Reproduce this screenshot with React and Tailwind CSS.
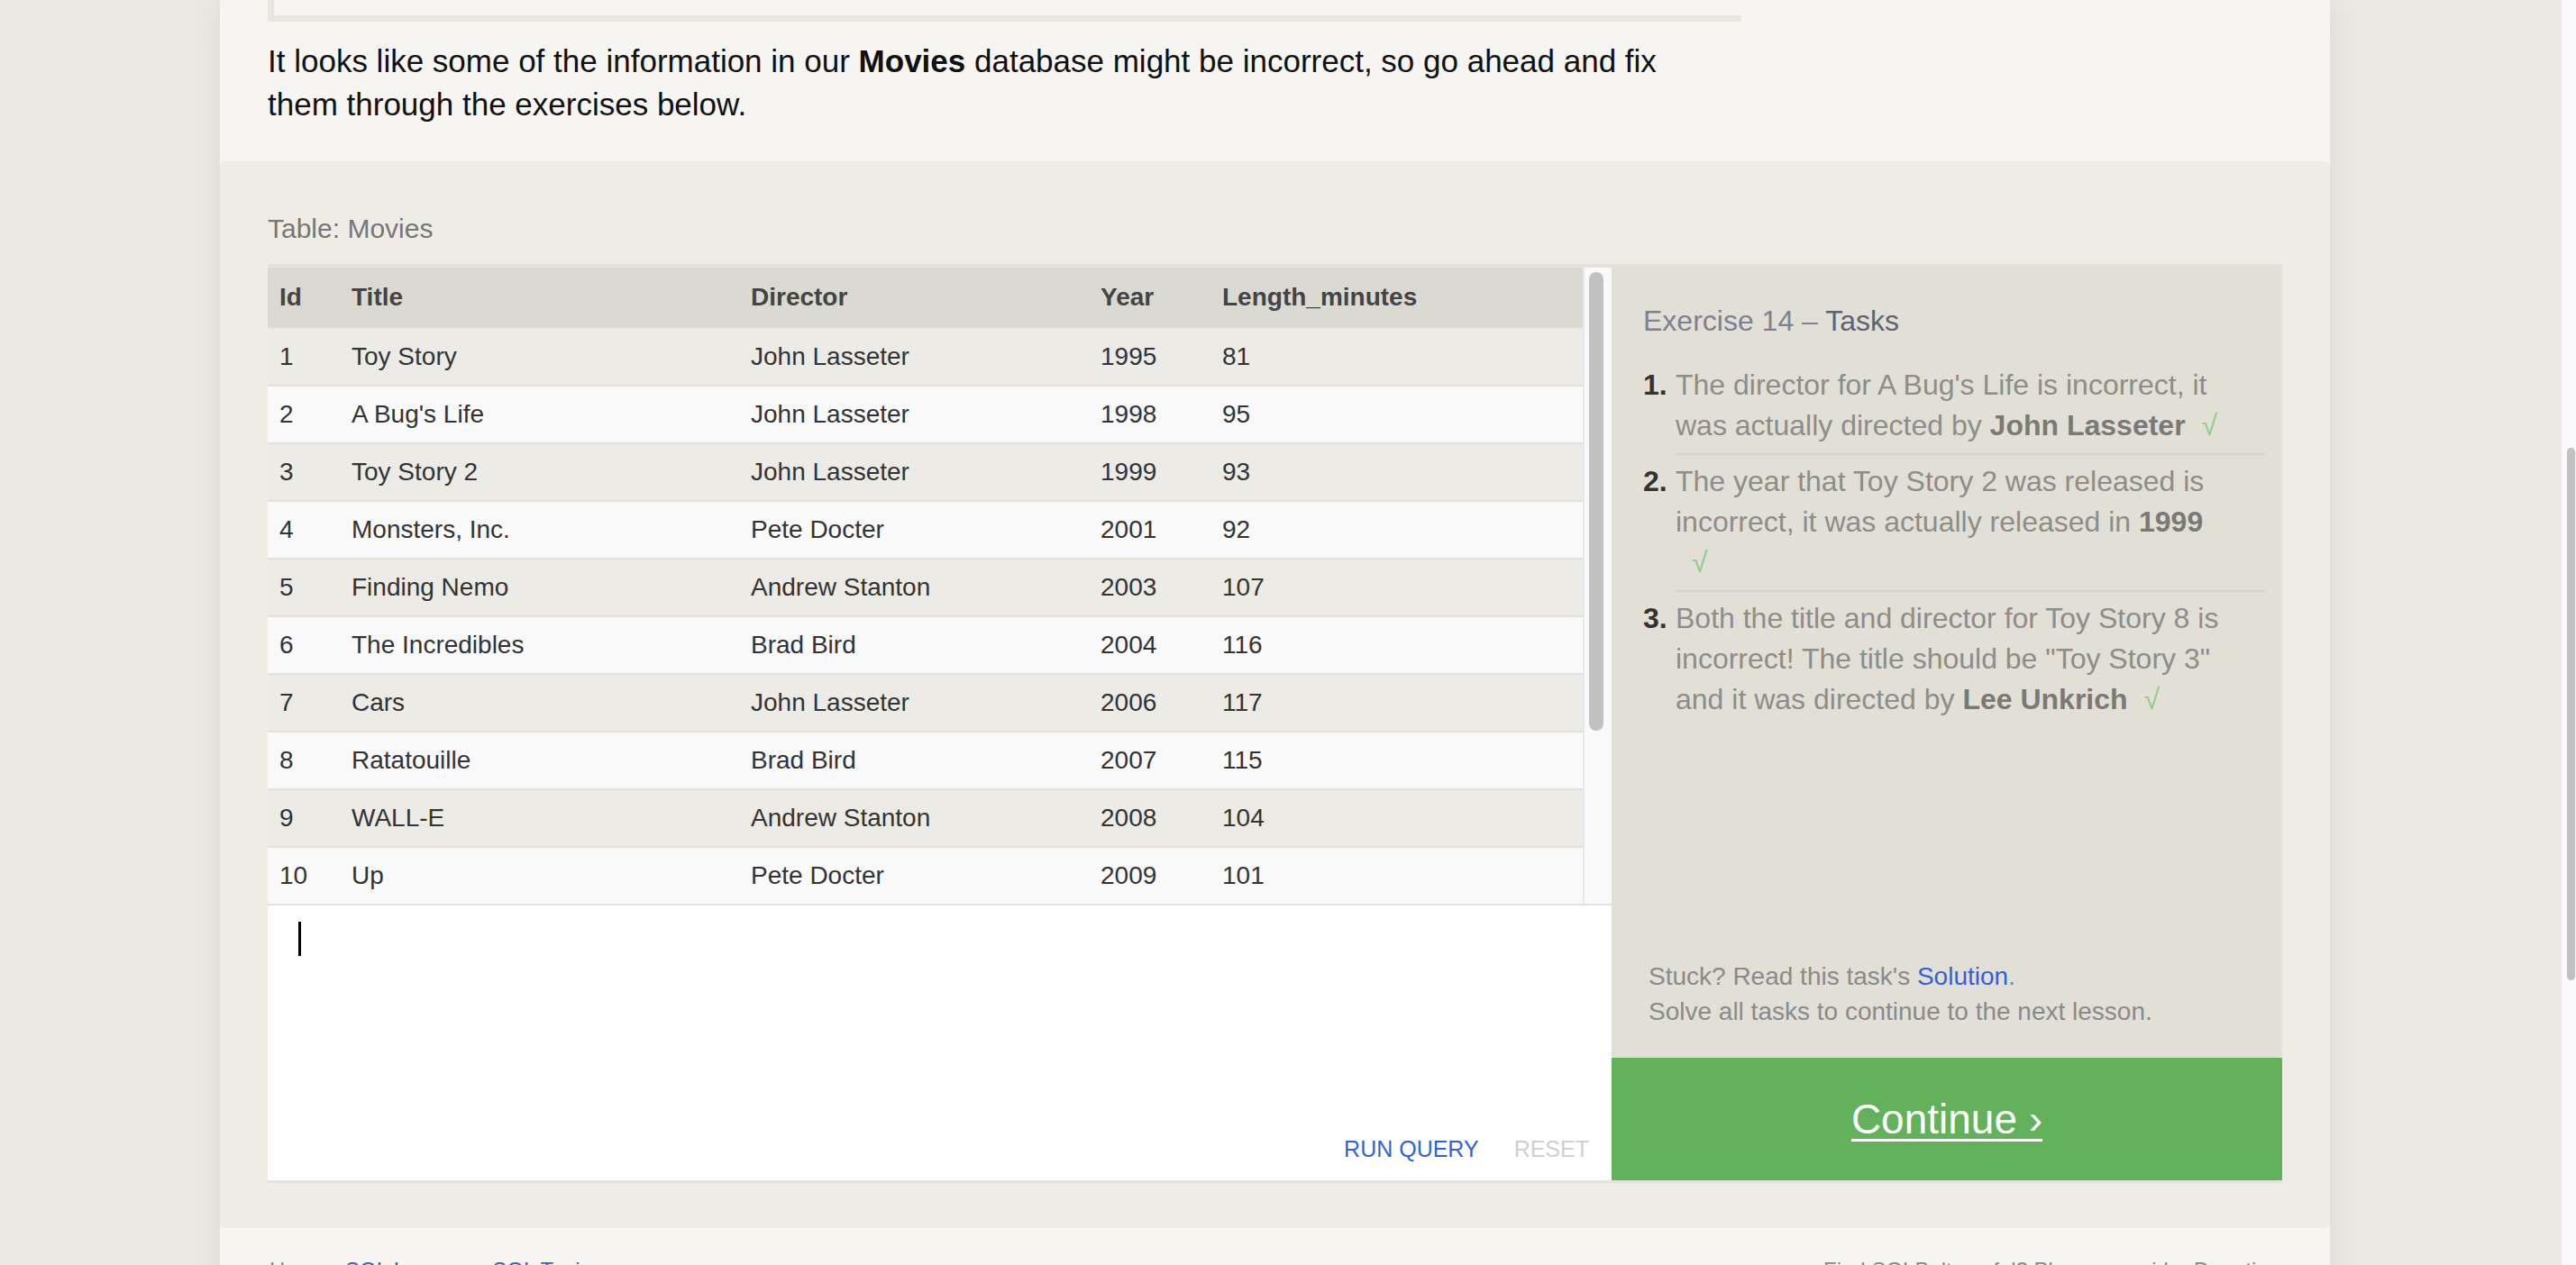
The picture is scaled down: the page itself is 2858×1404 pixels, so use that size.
const movies = [
  [1, 'Toy Story', 'John Lasseter', 1995, 81],
  [2, "A Bug's Life", 'John Lasseter', 1998, 95],
  [3, 'Toy Story 2', 'John Lasseter', 1999, 93],
  [4, 'Monsters, Inc.', 'Pete Docter', 2001, 92],
  [5, 'Finding Nemo', 'Andrew Stanton', 2003, 107],
  [6, 'The Incredibles', 'Brad Bird', 2004, 116],
  [7, 'Cars', 'John Lasseter', 2006, 117],
  [8, 'Ratatouille', 'Brad Bird', 2007, 115],
  [9, 'WALL-E', 'Andrew Stanton', 2008, 104],
  [10, 'Up', 'Pete Docter', 2009, 101],
]

const cols = 'grid grid-cols-[80px_443px_388px_135px_1fr] items-center'

function Check() {
  return <span className="ml-[18px] text-[#8fcd88]">√</span>
}

function MoviesTable() {
  return (
    <div className="flex">
      <div className="w-[1459px]">
        <div className={`${cols} h-[66px] bg-[#dbdad2] text-[28px] font-bold text-[#444]`}>
          {['Id', 'Title', 'Director', 'Year', 'Length_minutes'].map((h) => (
            <div key={h} className="pl-[13px]">{h}</div>
          ))}
        </div>
        {movies.map((row, i) => (
          <div
            key={row[0]}
            className={`${cols} h-[64px] border-t-2 border-[#e2e1db] text-[28px] text-[#333] ${
              i % 2 === 0 ? 'bg-[#ecebe5]' : 'bg-[#f9f9f9]'
            }`}
          >
            {row.map((cell, j) => (
              <div key={j} className="pl-[13px]">{cell}</div>
            ))}
          </div>
        ))}
      </div>
      {/* inner scrollbar */}
      <div className="w-[32px] border-l-2 border-[#e8e8e8] bg-[#f9f9f9] pt-[5px]">
        <div className="ml-[5px] h-[509px] w-[16px] rounded-full bg-[#c1c1c1]" />
      </div>
    </div>
  )
}

function Tasks() {
  return (
    <div className="flex w-[744px] flex-col bg-[#e2dfd7]">
      <div className="pl-[35px] pr-[18px] pt-[39px]">
        <h3 className="text-[32px] leading-[40px] text-[#7c8290]">
          Exercise 14 – <span className="text-[#5d6370]">Tasks</span>
        </h3>
        <ol className="mt-[29px] text-[32px] leading-[45px]">
          <li className="flex">
            <span className="w-[36px] font-bold text-[#333]">1.</span>
            <div className="flex-1 border-b-2 border-[#d7d4cb] pb-[8px] text-[#8e8d87]">
              The director for A Bug's Life is incorrect, it
              <br />
              was actually directed by <b className="text-[#7a7a75]">John Lasseter</b>
              <Check />
            </div>
          </li>
          <li className="flex pt-[7px]">
            <span className="w-[36px] font-bold text-[#333]">2.</span>
            <div className="flex-1 border-b-2 border-[#d7d4cb] pb-[8px] text-[#8e8d87]">
              The year that Toy Story 2 was released is
              <br />
              incorrect, it was actually released in <b className="text-[#7a7a75]">1999</b>
              <br />
              <Check />
            </div>
          </li>
          <li className="flex pt-[7px]">
            <span className="w-[36px] font-bold text-[#333]">3.</span>
            <div className="flex-1 text-[#8e8d87]">
              Both the title and director for Toy Story 8 is
              <br />
              incorrect! The title should be "Toy Story 3"
              <br />
              and it was directed by <b className="text-[#7a7a75]">Lee Unkrich</b>
              <Check />
            </div>
          </li>
        </ol>
      </div>
      <div className="flex-1" />
      <div className="mb-[32px] pl-[41px] text-[28px] leading-[39px] text-[#8a8a8a]">
        <p>
          Stuck? Read this task's <a className="text-[#2e63d6]">Solution</a>.
        </p>
        <p>Solve all tasks to continue to the next lesson.</p>
      </div>
      <div className="flex h-[136px] items-center justify-center bg-[#61b25a]">
        <a className="text-[46px] leading-none text-white underline decoration-[3px] underline-offset-[6px]">
          Continue ›
        </a>
      </div>
    </div>
  )
}

export default function App() {
  return (
    <div
      className="flex h-[1404px] overflow-hidden bg-[#ece8e4]"
      style={{ fontFamily: '"Liberation Sans", Arial, sans-serif' }}
    >
      <div className="flex-1">
        <div className="ml-[244px] w-[2341px] bg-[#f6f5f1] shadow-[0_0_40px_rgba(0,0,0,0.07)]">
          {/* intro */}
          <div className="px-[53px] pb-[39px]">
            <div className="h-[24px] w-[1635px] border-b-[7px] border-l-[7px] border-[#e8e7df]" />
            <p className="mt-[20px] text-[35px] leading-[48px] text-[#111]">
              It looks like some of the information in our <b>Movies</b> database might be incorrect, so go ahead and fix
              <br />
              them through the exercises below.
            </p>
          </div>

          {/* exercise */}
          <div className="rounded-[6px] bg-[#efece5] px-[53px] pb-[50px] pt-[57px]">
            <div className="text-[30px] leading-[36px] text-[#777]">Table: Movies</div>
            <div className="mt-[21px] flex border-b-[3px] border-t-4 border-[#e4e2dc]">
              <div className="flex w-[1491px] flex-col">
                <MoviesTable />
                <div className="flex h-[307px] flex-col border-t-2 border-[#e3e2dc] bg-white">
                  <div className="flex-1 pl-[34px] pt-[18px]">
                    <div className="h-[38px] w-[3px] bg-black" />
                  </div>
                  <div className="flex justify-end gap-[39px] pb-[20px] pr-[25px] text-[25px] leading-[30px]">
                    <button className="text-[#2e63d6]">RUN QUERY</button>
                    <button className="text-[#cfcfcf]">RESET</button>
                  </div>
                </div>
              </div>
              <Tasks />
            </div>
          </div>

          {/* footer */}
          <div className="flex justify-between px-[55px] pt-[32px] text-[24px] leading-[30px] text-[#888]">
            <div className="flex gap-[20px]">
              <span>Home</span>
              <a className="text-[#2e63d6]">SQL Lessons</a>
              <a className="text-[#2e63d6]">SQL Topics</a>
            </div>
            <div>Find SQLBolt useful? Please consider Donating</div>
          </div>
          <div className="h-[200px]" />
        </div>
      </div>

      {/* page scrollbar */}
      <div className="w-[16px] bg-[#fafafa] pt-[497px]">
        <div className="ml-[6px] h-[591px] w-[9px] rounded-full bg-[#c1c1c1]" />
      </div>
    </div>
  )
}
